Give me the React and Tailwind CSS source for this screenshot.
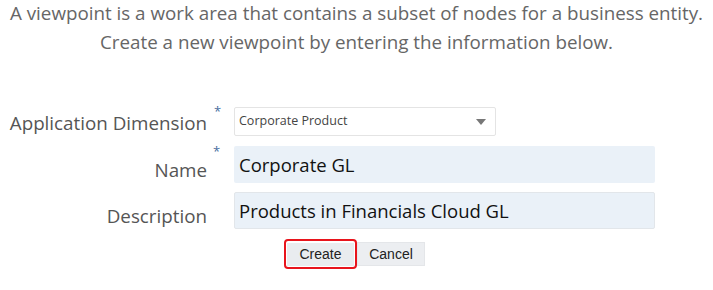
export default function App() {
  return (
    <div className="w-[713px] h-[290px] bg-white overflow-hidden" style={{ fontFamily: '"Open Sans", "Noto Sans", sans-serif' }}>
      <div className="-mt-[1px] text-center text-[#666666] text-[18.8px] leading-[29px]">
        <p>A viewpoint is a work area that contains a subset of nodes for a business entity.</p>
        <p>Create a new viewpoint by entering the information below.</p>
      </div>

      <div className="mt-[50px] flex flex-col">
        <div className="flex items-center h-[29px]">
          <label className="w-[207px] text-right text-[18.8px] text-[#555555] leading-[29px] pt-[3px]">
            Application Dimension
          </label>
          <span className="w-[27px] self-start -mt-[5px] pl-[7px] text-[#4a6fa0] text-[13px]">*</span>
          <div className="w-[262px] h-[29px] border border-[#e4e4e4] rounded-[2px] flex items-center justify-between pl-[4px] pr-[9px]">
            <span className="text-[12.5px] text-[#444444]">Corporate Product</span>
            <svg width="10" height="6" viewBox="0 0 10 6">
              <path d="M0 0 H10 L5 6 Z" fill="#777777" />
            </svg>
          </div>
        </div>

        <div className="flex items-center h-[37px] mt-[10px]">
          <label className="w-[207px] text-right text-[18.8px] text-[#555555] leading-[29px] pt-[11px]">
            Name
          </label>
          <span className="w-[27px] self-start -mt-[4px] pl-[6px] text-[#4a6fa0] text-[13px]">*</span>
          <div className="w-[421px] h-[37px] bg-[#eaf1f8] rounded-[2px] flex items-center pl-[5px]">
            <span className="text-[18.5px] text-[#111111]">Corporate GL</span>
          </div>
        </div>

        <div className="flex items-center h-[37px] mt-[9px]">
          <label className="w-[207px] text-right text-[18.8px] text-[#555555] leading-[29px] pt-[11px]">
            Description
          </label>
          <span className="w-[27px]"></span>
          <div className="w-[421px] h-[37px] bg-[#eaf1f8] border border-[#e2e6ea] rounded-[2px] flex items-center pl-[4px]">
            <span className="text-[18.5px] text-[#111111]">Products in Financials Cloud GL</span>
          </div>
        </div>

        <div className="flex items-center mt-[10px] pl-[284px]" style={{ fontFamily: '"Liberation Sans", Arial, sans-serif' }}>
          <div className="border-2 border-[#e8141c] rounded-[4px] p-[1px]">
            <button className="w-[67px] h-[23px] bg-[#e9ecef] text-[14px] text-[#222222]">Create</button>
          </div>
          <button className="w-[68px] h-[24px] bg-[#eceef1] border border-[#e4e6e9] text-[14px] text-[#222222]">Cancel</button>
        </div>
      </div>
    </div>
  );
}
